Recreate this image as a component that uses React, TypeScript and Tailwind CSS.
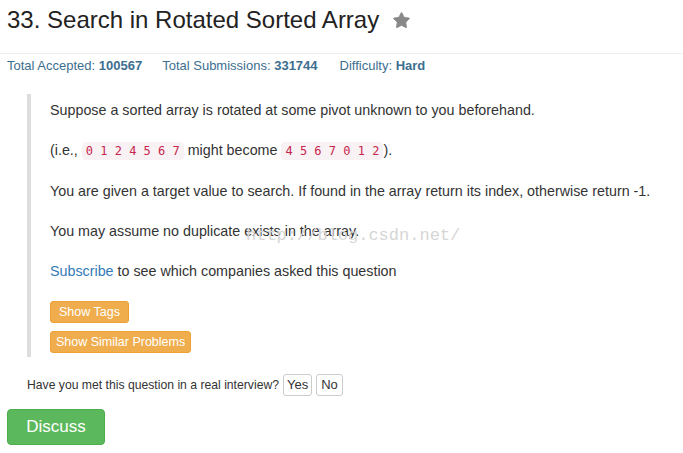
import { Star } from "lucide-react";

const Code = ({ children }: { children: string }) => (
  <code className="rounded-[4px] bg-[#f9f2f4] px-[4px] py-[2px] text-[12px] text-[#c7254e] [font-family:'DejaVu_Sans_Mono',monospace]">
    {children}
  </code>
);

export default function App() {
  return (
    <div className="relative min-h-[453px] w-[683px] bg-white text-[#333] [font-family:'Liberation_Sans',Arial,sans-serif]">
      <div className="flex items-center gap-[13px] px-[7px] pt-[6px]">
        <h3 className="text-[24px] leading-[28px] text-[#222]">33. Search in Rotated Sorted Array</h3>
        <Star className="h-[19px] w-[19px] fill-[#888] text-[#888]" strokeWidth={1} />
      </div>

      <div className="mt-[19px] border-t border-[#eee] px-[7px] pt-[3px] text-[13px] leading-[18px] text-[#3d6e8f]">
        <span>Total Accepted: <b>100567</b></span>
        <span className="ml-[20px]">Total Submissions: <b>331744</b></span>
        <span className="ml-[22px]">Difficulty: <b>Hard</b></span>
      </div>

      <div className="ml-[27px] mt-[19px] border-l-[4px] border-[#ddd] pl-[19px] pt-[6px] pb-[4px] text-[14.3px] leading-[20px]">
        <p>Suppose a sorted array is rotated at some pivot unknown to you beforehand.</p>
        <p className="mt-[20px]">
          (i.e., <Code>0 1 2 4 5 6 7</Code> might become <Code>4 5 6 7 0 1 2</Code>).
        </p>
        <p className="mt-[20px]">
          You are given a target value to search. If found in the array return its index, otherwise return -1.
        </p>
        <p className="mt-[20px]">You may assume no duplicate exists in the array.</p>
        <p className="mt-[20px]">
          <a className="text-[#337ab7]">Subscribe</a> to see which companies asked this question
        </p>
        <div className="mt-[20px] flex flex-col items-start gap-[8px]">
          <button className="h-[22px] rounded-[3px] border border-[#eea236] bg-[#f0ad4e] px-[8px] text-[12.5px] text-white">
            Show Tags
          </button>
          <button className="h-[22px] rounded-[3px] border border-[#eea236] bg-[#f0ad4e] px-[5px] text-[12.5px] text-white">
            Show Similar Problems
          </button>
        </div>
      </div>

      <div className="ml-[27px] mt-[17px] flex items-center gap-[4px] text-[12.2px]">
        <span>Have you met this question in a real interview?</span>
        <button className="h-[22px] rounded-[3px] border border-[#ccc] px-[3px] text-[13px]">Yes</button>
        <button className="h-[22px] rounded-[3px] border border-[#ccc] px-[4px] text-[13px]">No</button>
      </div>

      <div className="px-[7px] pt-[13px]">
        <button className="h-[36px] w-[98px] rounded-[4px] border border-[#4cae4c] bg-[#5cb85c] text-[17px] text-white">
          Discuss
        </button>
      </div>

      <span className="pointer-events-none absolute left-[246px] top-[223px] text-[17px] text-[#d6d6d6] [font-family:'Liberation_Mono',monospace]">
        http://blog.csdn.net/
      </span>
    </div>
  );
}
